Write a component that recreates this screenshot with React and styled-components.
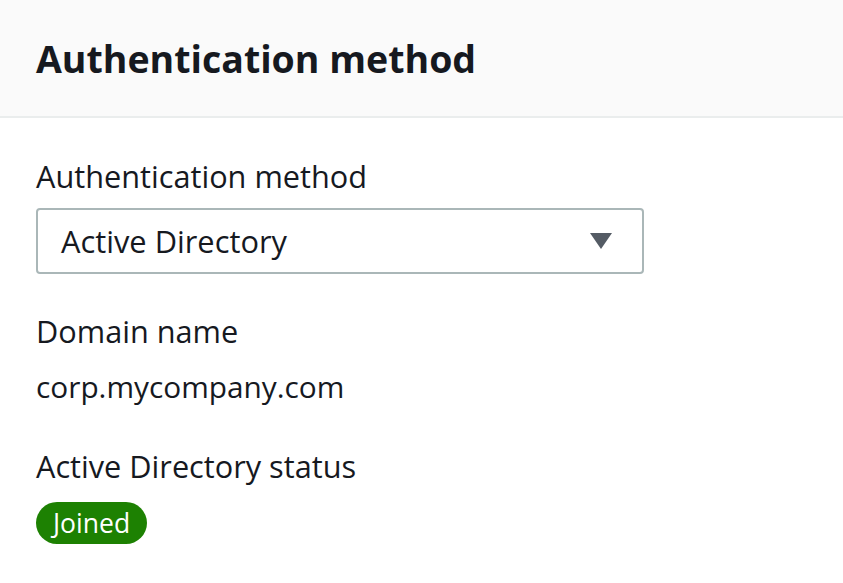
import React from 'react';
import styled, { createGlobalStyle } from 'styled-components';

const GlobalStyle = createGlobalStyle`
  html, body {
    margin: 0;
    padding: 0;
    background: #fff;
  }
  body {
    font-family: "Open Sans", "Noto Sans", Arial, sans-serif;
    color: #16191f;
  }
`;

const Panel = styled.div`
  width: 843px;
  height: 583px;
  background: #fff;
  overflow: hidden;
`;

const Header = styled.div`
  background: #fafafa;
  border-bottom: 2px solid #eaeded;
  height: 116px;
  padding: 0 36px;
  display: flex;
  align-items: center;
  h2 {
    margin: 0;
    font-size: 37.5px;
    font-weight: 700;
  }
`;

const Body = styled.div`
  padding: 38px 36px 0;
  display: flex;
  flex-direction: column;
`;

const Field = styled.div`
  display: flex;
  flex-direction: column;
  margin-bottom: ${p => p.gap || 0}px;
`;

const Label = styled.div`
  font-size: 30.7px;
  line-height: 40px;
`;

const Value = styled.div`
  font-size: 29.8px;
  line-height: 40px;
  margin-top: ${p => p.top || 0}px;
`;

const Select = styled.div`
  margin-top: 12px;
  width: 608px;
  height: 66px;
  box-sizing: border-box;
  border: 2px solid #aab7b8;
  border-radius: 4px;
  display: flex;
  align-items: center;
  justify-content: space-between;
  padding: 0 30px 0 23px;
  font-size: 30.8px;
`;

const Badge = styled.span`
  align-self: flex-start;
  margin-top: 16px;
  background: #1d8102;
  color: #fff;
  border-radius: 22px;
  font-size: 26.5px;
  font-weight: 500;
  line-height: 42px;
  padding: 0 17px;
`;

export default function App() {
  return (
    <Panel>
      <GlobalStyle />
      <Header>
        <h2>Authentication method</h2>
      </Header>
      <Body>
        <Field gap={37}>
          <Label>Authentication method</Label>
          <Select>
            <span>Active Directory</span>
            <svg width="22" height="16" viewBox="0 0 22 16">
              <polygon points="0,0 22,0 11,16" fill="#545b64" />
            </svg>
          </Select>
        </Field>
        <Field gap={39}>
          <Label>Domain name</Label>
          <Value top={16}>corp.mycompany.com</Value>
        </Field>
        <Field>
          <Label>Active Directory status</Label>
          <Badge>Joined</Badge>
        </Field>
      </Body>
    </Panel>
  );
}
